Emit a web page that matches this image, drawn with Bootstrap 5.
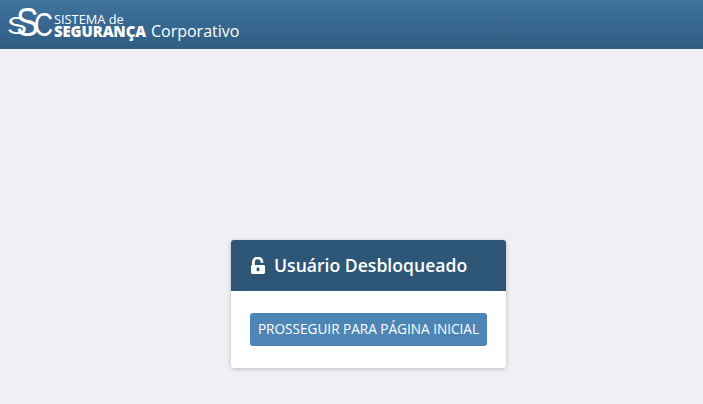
<!DOCTYPE html>
<html lang="pt-BR">
<head>
    <meta charset="UTF-8">
    <meta name="viewport" content="width=device-width, initial-scale=1.0">
    <title>Sistema de Segurança Corporativo</title>
    <link href="https://cdn.jsdelivr.net/npm/bootstrap@5.3.0/dist/css/bootstrap.min.css" rel="stylesheet">
    <style>
        body {
            background-color: #efeff5;
            font-family: "Open Sans", "Noto Sans", sans-serif;
            min-height: 404px;
            overflow: hidden;
        }
        .topo {
            height: 49px;
            padding-left: 8px;
            background: linear-gradient(#40739f, #2f5c82);
            color: #fff;
        }
        .logo-ssc { flex: none; overflow: visible; }
        .logo-ssc text {
            font-family: "Liberation Sans", sans-serif;
            fill: #fff;
        }
        .logo-texto {
            padding-top: 3px;
            line-height: 1;
        }
        .logo-l1 { font-size: 12.8px; height: 10px; white-space: nowrap; }
        .logo-l2 { font-size: 16px; white-space: nowrap; }
        .logo-l2 b { font-weight: 800; font-size: 14.9px; letter-spacing: -.1px; }
        .logo-l2 i { font-style: normal; margin-left: 5px; }
        .area-central { padding: 191px 0 0 34px; }
        .caixa {
            width: 275px;
            height: 128px;
            border: 0;
            border-radius: 3px;
            box-shadow: 0 1px 4px rgba(0, 0, 0, .22);
            overflow: hidden;
        }
        .caixa .card-header {
            height: 51px;
            padding: 0 19px;
            border: 0;
            border-radius: 0;
            background-color: #2e5777;
            color: #fff;
            font-size: 17.6px;
            font-weight: 600;
            gap: 8px;
        }
        .caixa .card-body { padding: 22px 19px; }
        .btn-prosseguir {
            width: 237px;
            height: 33px;
            padding: 0;
            border: 0;
            border-radius: 3px;
            background-color: #4d86b5;
            color: #fff;
            font-size: 13.6px;
            white-space: nowrap;
        }
        .btn-prosseguir:hover { background-color: #437aa8; color: #fff; }
    </style>
</head>
<body>
    <!-- Barra superior -->
    <header class="topo d-flex align-items-center">
        <svg class="logo-ssc" width="46" height="36" viewBox="0 0 46 36" aria-label="SSC">
            <text transform="translate(-1 26.5) scale(1.25 1)" font-size="24">S</text>
            <text transform="translate(8 28.5) scale(.85 1)" font-size="40">S</text>
            <text transform="translate(26 29) scale(.8 1)" font-size="33">C</text>
        </svg>
        <div class="logo-texto">
            <div class="logo-l1">SISTEMA de</div>
            <div class="logo-l2"><b>SEGURANÇA</b><i>Corporativo</i></div>
        </div>
    </header>

    <!-- Aviso de desbloqueio -->
    <main class="area-central d-flex justify-content-center">
        <div class="card caixa">
            <div class="card-header d-flex align-items-center">
                <svg width="16" height="17" viewBox="0 0 16 17" aria-hidden="true">
                    <path d="M3.4 8.5V5.2a4.3 4.3 0 0 1 8.6 0v.6" fill="none" stroke="#fff" stroke-width="2.8"/>
                    <rect x="1" y="8" width="14" height="9" rx="1.4" fill="#fff"/>
                    <rect x="6.6" y="10.6" width="2.8" height="3.6" rx="1" fill="#2e5777"/>
                </svg>
                <span>Usuário Desbloqueado</span>
            </div>
            <div class="card-body">
                <button type="button" class="btn btn-prosseguir">PROSSEGUIR PARA PÁGINA INICIAL</button>
            </div>
        </div>
    </main>

    <script src="https://cdn.jsdelivr.net/npm/bootstrap@5.3.0/dist/js/bootstrap.bundle.min.js"></script>
</body>
</html>
